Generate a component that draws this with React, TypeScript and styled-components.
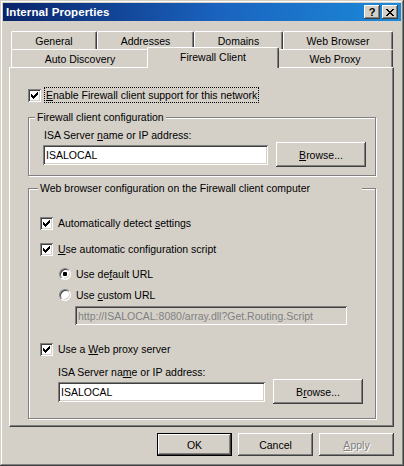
import styled, { createGlobalStyle, css } from "styled-components";

const FACE = "#d4d0c8";

const GlobalStyle = createGlobalStyle`
  html, body {
    margin: 0;
    padding: 0;
    background: ${FACE};
  }
  body {
    font-family: "Liberation Sans", Arial, sans-serif;
    font-size: 10.5px;
    color: #000;
  }
  * {
    box-sizing: border-box;
  }
`;

const tabRows = [
  [
    { label: "General", w: 86 },
    { label: "Addresses", w: 97 },
    { label: "Domains", w: 89 },
    { label: "Web Browser", w: 110 },
  ],
  [
    { label: "Auto Discovery", w: 138 },
    { label: "Firewall Client", w: 128, active: true },
    { label: "Web Proxy", w: 116 },
  ],
];

const CheckMark = () => (
  <svg width="7" height="7" viewBox="0 0 7 7" shapeRendering="crispEdges">
    <path
      fill="#000"
      d="M0 2h1v3H0z M1 3h1v3H1z M2 4h1v3H2z M3 3h1v3H3z M4 2h1v3H4z M5 1h1v3H5z M6 0h1v3H6z"
    />
  </svg>
);

const CloseGlyph = () => (
  <svg width="8" height="7" viewBox="0 0 8 7" shapeRendering="crispEdges">
    <path
      fill="#000"
      d="M0 0h2v1H0z M6 0h2v1H6z M1 1h2v1H1z M5 1h2v1H5z M2 2h4v1H2z M3 3h2v1H3z M2 4h4v1H2z M1 5h2v1H1z M5 5h2v1H5z M0 6h2v1H0z M6 6h2v1H6z"
    />
  </svg>
);

const App = () => {
  return (
    <>
      <GlobalStyle />
      <Window>
        <TitleBar>
          <Title>Internal Properties</Title>
          <CaptionButtons>
            <CaptionButton>?</CaptionButton>
            <CaptionButton>
              <CloseGlyph />
            </CaptionButton>
          </CaptionButtons>
        </TitleBar>

        <Body>
          <TabStrip>
            {tabRows.map((row, i) => (
              <TabRow key={i}>
                {row.map((tab) => (
                  <Tab key={tab.label} $w={tab.w} $active={tab.active}>
                    {tab.label}
                  </Tab>
                ))}
              </TabRow>
            ))}
          </TabStrip>

          <Panel>
            <CheckRow>
              <CheckBox>
                <CheckMark />
              </CheckBox>
              <Label $focus>
                <u>E</u>nable Firewall client support for this network
              </Label>
            </CheckRow>

            <Group $mt={14} $h={59} $pt={11} $pl={14}>
              <Legend $left={6}>Firewall client configuration</Legend>
              <FieldLabel $indent={1}>
                ISA Server <u>n</u>ame or IP address:
              </FieldLabel>
              <InputRow>
                <TextBox $w={225}>ISALOCAL</TextBox>
                <Button $w={90} $h={25}>
                  <u>B</u>rowse...
                </Button>
              </InputRow>
            </Group>

            <Group $mt={12} $h={231} $pt={26} $pl={11}>
              <Legend $left={9} $padRight={52}>
                Web browser configuration on the Firewall client computer
              </Legend>
              <CheckRow>
                <CheckBox>
                  <CheckMark />
                </CheckBox>
                <Label>
                  Automatically detect <u>s</u>ettings
                </Label>
              </CheckRow>
              <CheckRow $mt={10}>
                <CheckBox>
                  <CheckMark />
                </CheckBox>
                <Label>
                  <u>U</u>se automatic configuration script
                </Label>
              </CheckRow>
              <CheckRow $mt={9} $indent={19}>
                <Radio>
                  <RadioDot />
                </Radio>
                <Label>
                  Use de<u>f</u>ault URL
                </Label>
              </CheckRow>
              <CheckRow $mt={5} $indent={19}>
                <Radio />
                <Label>
                  Use <u>c</u>ustom URL
                </Label>
              </CheckRow>
              <TextBox $w={272} $h={19} $disabled $indent={35} $mt={3}>
                http://ISALOCAL:8080/array.dll?Get.Routing.Script
              </TextBox>
              <CheckRow $mt={16}>
                <CheckBox>
                  <CheckMark />
                </CheckBox>
                <Label>
                  Use a <u>W</u>eb proxy server
                </Label>
              </CheckRow>
              <FieldLabel $indent={18} $mt={9}>
                ISA Server na<u>m</u>e or IP address:
              </FieldLabel>
              <InputRow $indent={18}>
                <TextBox $w={207}>ISALOCAL</TextBox>
                <Button $w={90} $h={25}>
                  B<u>r</u>owse...
                </Button>
              </InputRow>
            </Group>
          </Panel>

          <DialogButtons>
            <Button $w={75} $h={23} $default>
              OK
            </Button>
            <Button $w={75} $h={23}>
              Cancel
            </Button>
            <Button $w={75} $h={23} disabled>
              <u>A</u>pply
            </Button>
          </DialogButtons>
        </Body>
      </Window>
    </>
  );
};

export default App;

const Window = styled.div`
  width: 404px;
  height: 466px;
  padding: 3px;
  background: ${FACE};
  box-shadow: inset -1px -1px #404040, inset 1px 1px ${FACE}, inset -2px -2px #808080,
    inset 2px 2px #fff;
  display: flex;
  flex-direction: column;
`;

const TitleBar = styled.div`
  height: 18px;
  flex: none;
  display: flex;
  align-items: center;
  justify-content: space-between;
  padding: 0 3px 0 3px;
  background: linear-gradient(90deg, #0a246a 0%, #1a64c0 55%, #1c8ad8 100%);
`;

const Title = styled.span`
  color: #fff;
  font-weight: 700;
  font-size: 11.5px;
  letter-spacing: 0.1px;
`;

const CaptionButtons = styled.div`
  display: flex;
  gap: 2px;
`;

const CaptionButton = styled.span`
  width: 16px;
  height: 14px;
  display: flex;
  align-items: center;
  justify-content: center;
  background: ${FACE};
  font-weight: 700;
  font-size: 11px;
  line-height: 1;
  box-shadow: inset -1px -1px #404040, inset 1px 1px #fff, inset -2px -2px #808080,
    inset 2px 2px ${FACE};
`;

const Body = styled.div`
  flex: 1;
  display: flex;
  flex-direction: column;
  padding: 10px 7px 0 6px;
`;

const TabStrip = styled.div`
  display: flex;
  flex-direction: column;
  padding-left: 2px;
`;

const TabRow = styled.div`
  display: flex;
  align-items: flex-start;
  height: 18px;
`;

const Tab = styled.div<{ $w: number; $active?: boolean }>`
  width: ${(p) => p.$w}px;
  height: 18px;
  flex: none;
  display: flex;
  justify-content: center;
  padding-top: 2px;
  line-height: 14px;
  background: ${FACE};
  border-top: 1px solid #fff;
  border-left: 1px solid #fff;
  border-right: 1px solid #404040;
  border-radius: 2px 2px 0 0;
  box-shadow: inset -1px 0 #808080;

  ${(p) =>
    p.$active &&
    css`
      width: ${p.$w + 4}px;
      height: 21px;
      margin: -2px -2px 0;
      padding-top: 2px;
      position: relative;
      z-index: 1;
    `}
`;

const Panel = styled.div`
  height: 360px;
  flex: none;
  display: flex;
  flex-direction: column;
  align-items: flex-start;
  padding: 19px 0 0 18px;
  border: 1px solid;
  border-color: #fff #404040 #404040 #fff;
  box-shadow: inset -1px -1px #808080;
`;

const CheckRow = styled.div<{ $mt?: number; $indent?: number }>`
  display: flex;
  align-items: center;
  height: 16px;
  margin-top: ${(p) => p.$mt ?? 0}px;
  margin-left: ${(p) => p.$indent ?? 0}px;
`;

const CheckBox = styled.span`
  width: 13px;
  height: 13px;
  flex: none;
  display: flex;
  align-items: center;
  justify-content: center;
  background: #fff;
  box-shadow: inset 1px 1px #808080, inset -1px -1px #fff, inset 2px 2px #404040,
    inset -2px -2px ${FACE};
`;

const Radio = styled.span`
  width: 12px;
  height: 12px;
  flex: none;
  display: flex;
  align-items: center;
  justify-content: center;
  border-radius: 50%;
  background: #fff;
  border: 1px solid;
  border-color: #808080 #fff #fff #808080;
  box-shadow: inset 1px 1px #404040, inset -1px -1px ${FACE};
`;

const RadioDot = styled.span`
  width: 4px;
  height: 4px;
  border-radius: 1px;
  background: #000;
`;

const Label = styled.span<{ $focus?: boolean }>`
  margin-left: 3px;
  padding: 0 1px;
  line-height: 14px;
  white-space: nowrap;
  border: 1px ${(p) => (p.$focus ? "dotted #000" : "solid transparent")};
`;

const Group = styled.div<{ $mt: number; $h: number; $pt: number; $pl: number }>`
  position: relative;
  width: 348px;
  height: ${(p) => p.$h}px;
  margin-top: ${(p) => p.$mt}px;
  padding: ${(p) => p.$pt}px 0 0 ${(p) => p.$pl}px;
  display: flex;
  flex-direction: column;
  align-items: flex-start;
  border: 1px solid #808080;
  box-shadow: inset 1px 1px #fff, 1px 1px #fff;
`;

const Legend = styled.span<{ $left: number; $padRight?: number }>`
  position: absolute;
  top: -8px;
  left: ${(p) => p.$left}px;
  padding: 0 ${(p) => p.$padRight ?? 2}px 0 2px;
  line-height: 14px;
  white-space: nowrap;
  background: ${FACE};
`;

const FieldLabel = styled.div<{ $indent?: number; $mt?: number }>`
  line-height: 13px;
  margin-left: ${(p) => p.$indent ?? 0}px;
  margin-top: ${(p) => p.$mt ?? 0}px;
`;

const InputRow = styled.div<{ $indent?: number }>`
  display: flex;
  align-items: center;
  gap: 8px;
  height: 25px;
  margin-left: ${(p) => p.$indent ?? 0}px;
`;

const TextBox = styled.div<{
  $w: number;
  $h?: number;
  $disabled?: boolean;
  $indent?: number;
  $mt?: number;
}>`
  width: ${(p) => p.$w}px;
  height: ${(p) => p.$h ?? 20}px;
  flex: none;
  margin-left: ${(p) => p.$indent ?? 0}px;
  margin-top: ${(p) => p.$mt ?? 0}px;
  padding: 0 3px;
  display: flex;
  align-items: center;
  white-space: nowrap;
  overflow: hidden;
  background: ${(p) => (p.$disabled ? FACE : "#fff")};
  color: ${(p) => (p.$disabled ? "#808080" : "#000")};
  box-shadow: inset 1px 1px #808080, inset -1px -1px #fff, inset 2px 2px #404040,
    inset -2px -2px ${FACE};
`;

const Button = styled.button<{ $w: number; $h: number; $default?: boolean }>`
  width: ${(p) => p.$w}px;
  height: ${(p) => p.$h}px;
  flex: none;
  padding: 0;
  font: inherit;
  color: #000;
  background: ${FACE};
  border: none;
  box-shadow: inset -1px -1px #404040, inset 1px 1px #fff, inset -2px -2px #808080,
    inset 2px 2px ${FACE};

  ${(p) =>
    p.$default &&
    css`
      border: 1px solid #000;
      box-shadow: inset -1px -1px #404040, inset 1px 1px #fff, inset -2px -2px #808080;
    `}

  &:disabled {
    color: #808080;
    text-shadow: 1px 1px #fff;
  }
`;

const DialogButtons = styled.div`
  display: flex;
  justify-content: flex-end;
  gap: 6px;
  margin-top: 6px;
`;
